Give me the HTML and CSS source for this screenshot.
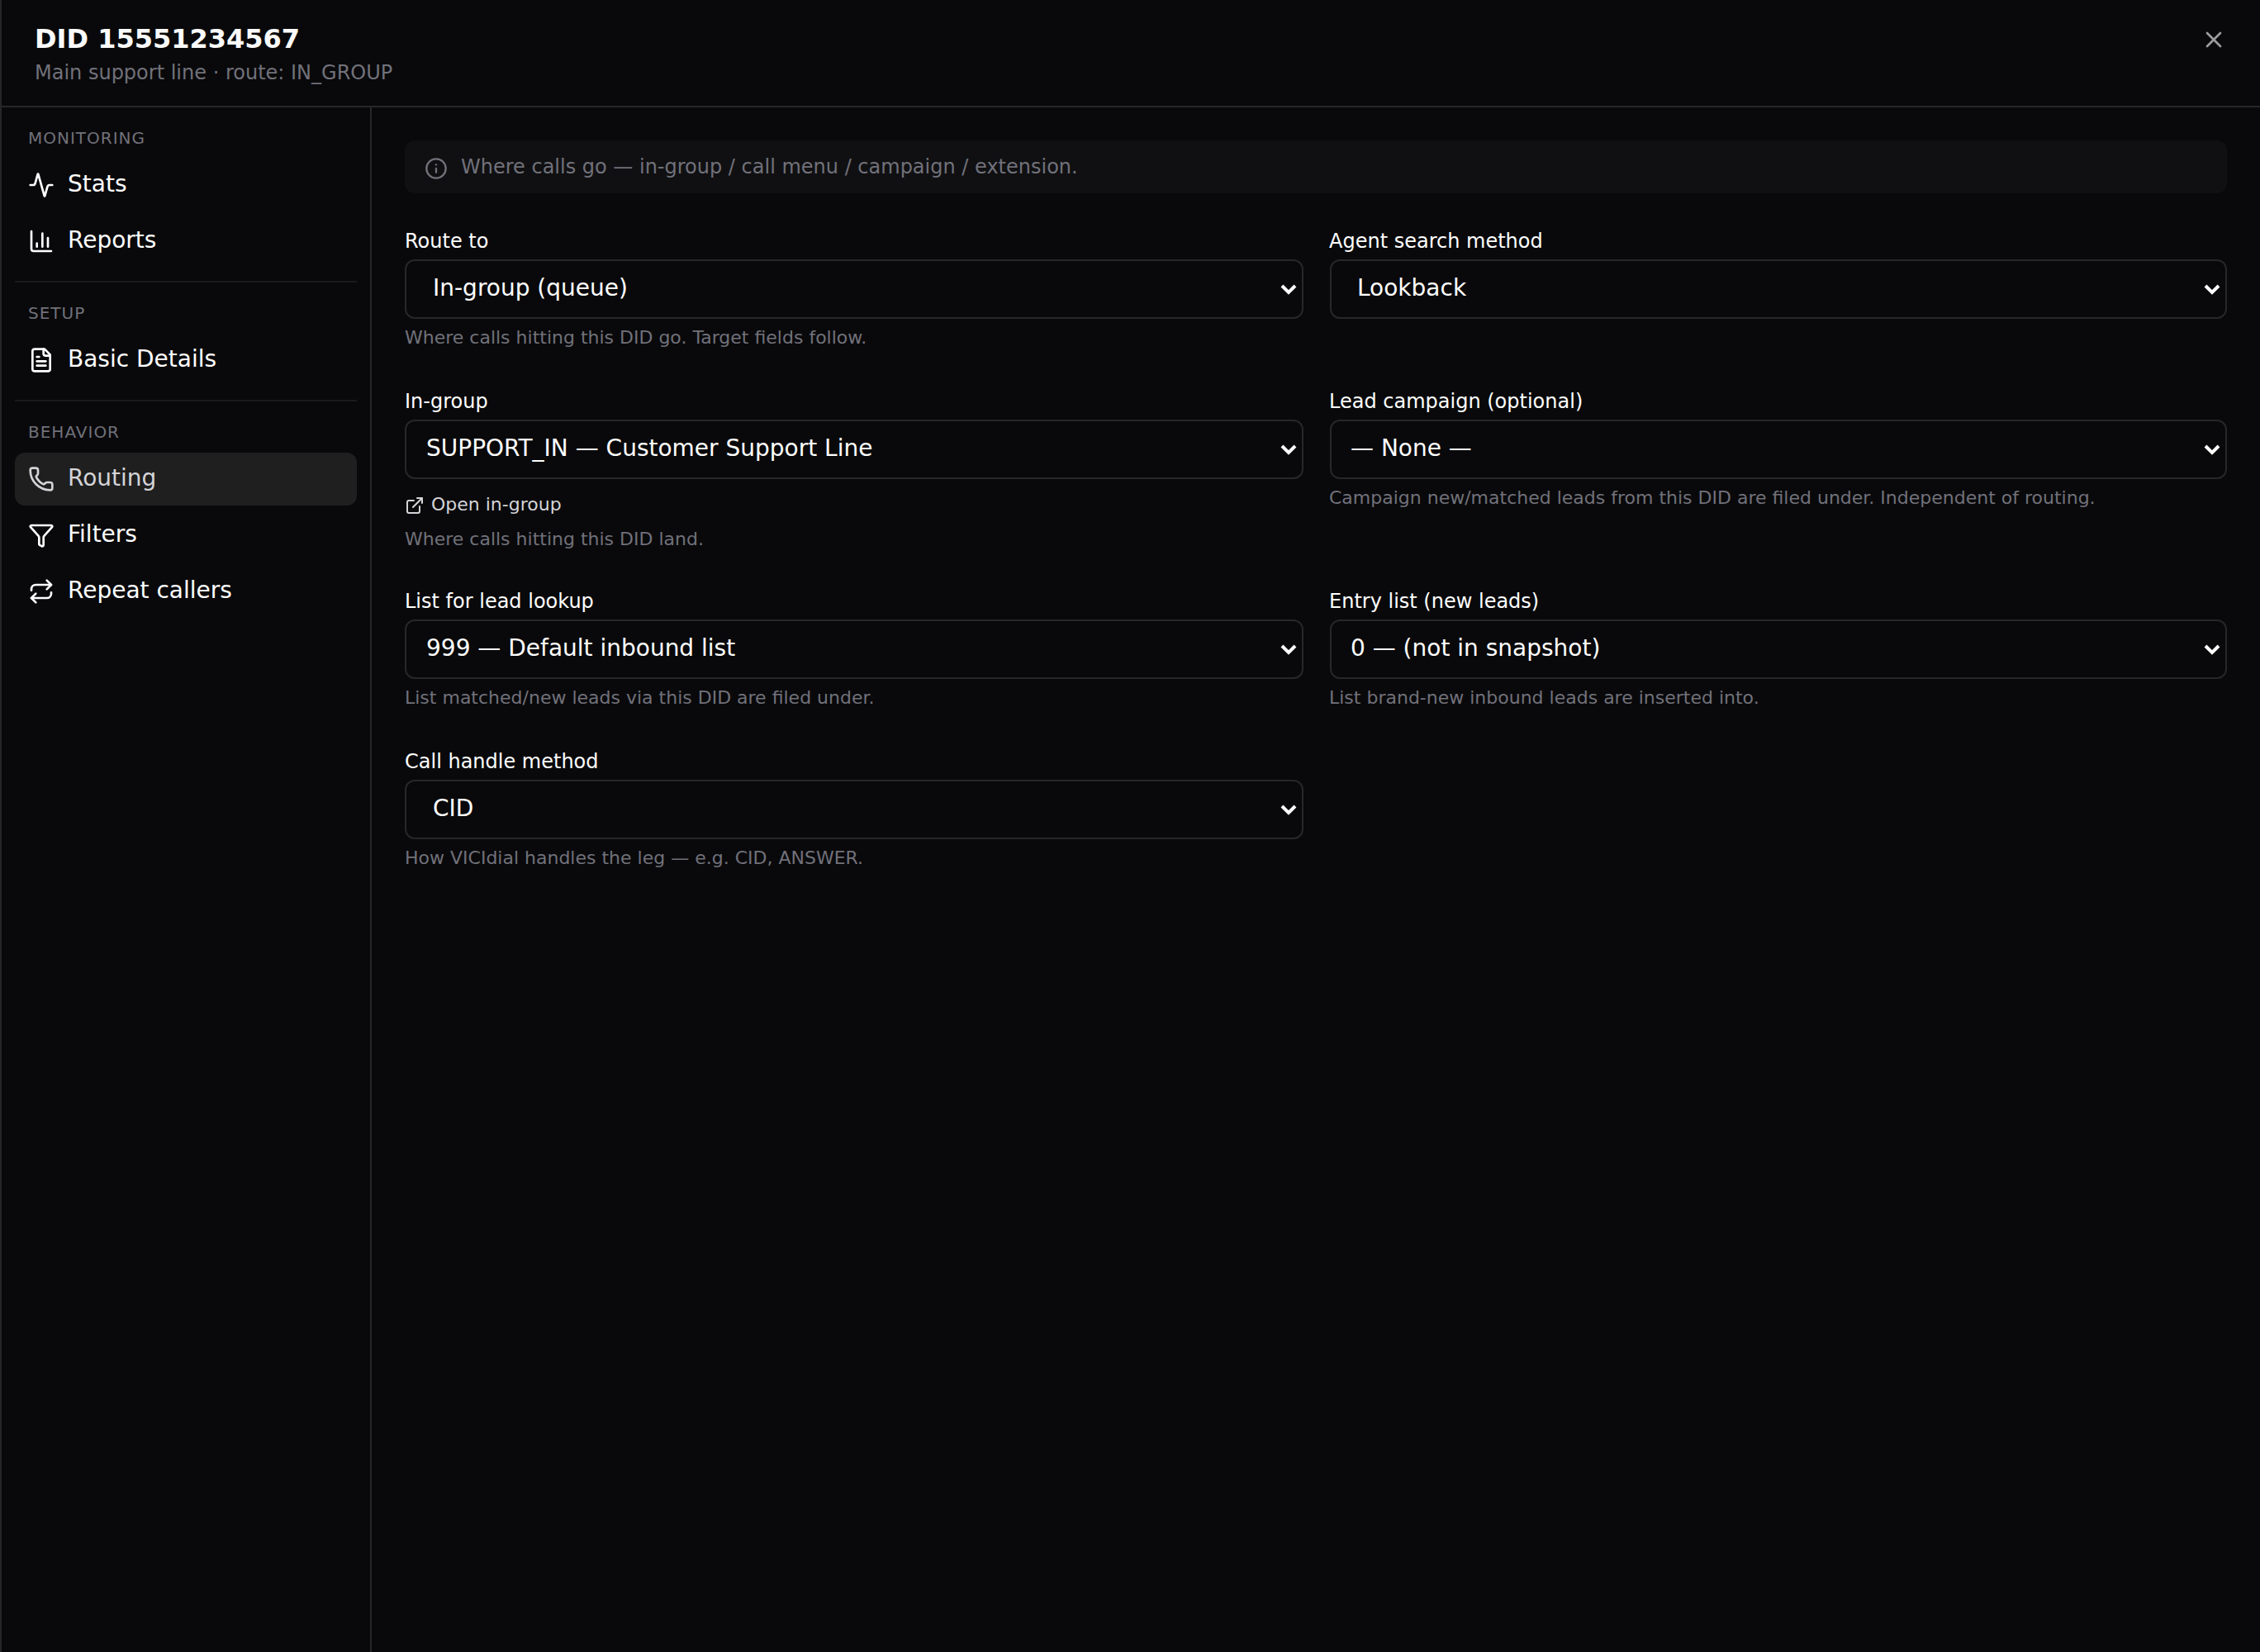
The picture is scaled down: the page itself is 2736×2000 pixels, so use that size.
FILE: index.html
```html
<!DOCTYPE html>
<html lang="en">
<head>
  <meta charset="UTF-8">
  <title>DID 15551234567</title>
  <link rel="stylesheet" href="styles.css">
</head>
<body>
  <div class="drawer">
    <header class="header">
      <div>
        <h1>DID 15551234567</h1>
        <p class="subtitle">Main support line · route: IN_GROUP</p>
      </div>
      <button class="close" aria-label="Close">
        <svg class="icon" viewBox="0 0 24 24"><path d="M18 6 6 18"/><path d="m6 6 12 12"/></svg>
      </button>
    </header>

    <div class="body">
      <nav class="sidebar">
        <div class="nav-group">
          <h2>Monitoring</h2>
          <a class="nav-item">
            <svg class="icon" viewBox="0 0 24 24"><path d="M22 12h-2.48a2 2 0 0 0-1.93 1.46l-2.35 8.36a.25.25 0 0 1-.48 0L9.24 2.18a.25.25 0 0 0-.48 0l-2.35 8.36A2 2 0 0 1 4.49 12H2"/></svg>
            <span>Stats</span>
          </a>
          <a class="nav-item">
            <svg class="icon" viewBox="0 0 24 24"><path d="M3 3v16a2 2 0 0 0 2 2h16"/><path d="M18 17V9"/><path d="M13 17V5"/><path d="M8 17v-3"/></svg>
            <span>Reports</span>
          </a>
        </div>
        <div class="nav-group">
          <h2>Setup</h2>
          <a class="nav-item">
            <svg class="icon" viewBox="0 0 24 24"><path d="M15 2H6a2 2 0 0 0-2 2v16a2 2 0 0 0 2 2h12a2 2 0 0 0 2-2V7Z"/><path d="M14 2v4a2 2 0 0 0 2 2h4"/><path d="M10 9H8"/><path d="M16 13H8"/><path d="M16 17H8"/></svg>
            <span>Basic Details</span>
          </a>
        </div>
        <div class="nav-group">
          <h2>Behavior</h2>
          <a class="nav-item active">
            <svg class="icon" viewBox="0 0 24 24"><path d="M13.832 16.568a1 1 0 0 0 1.213-.303l.355-.465A2 2 0 0 1 17 15h3a2 2 0 0 1 2 2v3a2 2 0 0 1-2 2A18 18 0 0 1 2 4a2 2 0 0 1 2-2h3a2 2 0 0 1 2 2v3a2 2 0 0 1-.8 1.6l-.468.351a1 1 0 0 0-.292 1.233 14 14 0 0 0 6.392 6.384"/></svg>
            <span>Routing</span>
          </a>
          <a class="nav-item">
            <svg class="icon" viewBox="0 0 24 24"><path d="M10 20a1 1 0 0 0 .553.895l2 1A1 1 0 0 0 14 21v-7a2 2 0 0 1 .517-1.341L21.74 4.67A1 1 0 0 0 21 3H3a1 1 0 0 0-.742 1.67l7.225 7.989A2 2 0 0 1 10 14z"/></svg>
            <span>Filters</span>
          </a>
          <a class="nav-item">
            <svg class="icon" viewBox="0 0 24 24"><path d="m17 2 4 4-4 4"/><path d="M3 11v-1a4 4 0 0 1 4-4h14"/><path d="m7 22-4-4 4-4"/><path d="M21 13v1a4 4 0 0 1-4 4H3"/></svg>
            <span>Repeat callers</span>
          </a>
        </div>
      </nav>

      <main class="content">
        <div class="info">
          <svg class="icon" viewBox="0 0 24 24"><circle cx="12" cy="12" r="10"/><path d="M12 16v-4"/><path d="M12 8h.01"/></svg>
          <span>Where calls go — in-group / call menu / campaign / extension.</span>
        </div>

        <form class="fields">
          <div class="field">
            <label for="route">Route to</label>
            <div class="select-wrap">
              <select id="route" class="plain"><option>In-group (queue)</option></select>
              <svg class="chevron" viewBox="0 0 20 14"><path d="m2 2 8 8 8-8"/></svg>
            </div>
            <p class="hint">Where calls hitting this DID go. Target fields follow.</p>
          </div>

          <div class="field">
            <label for="search_method">Agent search method</label>
            <div class="select-wrap">
              <select id="search_method" class="plain"><option>Lookback</option></select>
              <svg class="chevron" viewBox="0 0 20 14"><path d="m2 2 8 8 8-8"/></svg>
            </div>
          </div>

          <div class="field">
            <label for="ingroup">In-group</label>
            <div class="select-wrap">
              <select id="ingroup"><option>SUPPORT_IN — Customer Support Line</option></select>
              <svg class="chevron" viewBox="0 0 20 14"><path d="m2 2 8 8 8-8"/></svg>
            </div>
            <a class="open-link">
              <svg class="icon" viewBox="0 0 24 24"><path d="M15 3h6v6"/><path d="M10 14 21 3"/><path d="M18 13v6a2 2 0 0 1-2 2H5a2 2 0 0 1-2-2V8a2 2 0 0 1 2-2h6"/></svg>
              <span>Open in-group</span>
            </a>
            <p class="hint">Where calls hitting this DID land.</p>
          </div>

          <div class="field">
            <label for="campaign">Lead campaign (optional)</label>
            <div class="select-wrap">
              <select id="campaign"><option>— None —</option></select>
              <svg class="chevron" viewBox="0 0 20 14"><path d="m2 2 8 8 8-8"/></svg>
            </div>
            <p class="hint">Campaign new/matched leads from this DID are filed under. Independent of routing.</p>
          </div>

          <div class="field">
            <label for="lookup_list">List for lead lookup</label>
            <div class="select-wrap">
              <select id="lookup_list"><option>999 — Default inbound list</option></select>
              <svg class="chevron" viewBox="0 0 20 14"><path d="m2 2 8 8 8-8"/></svg>
            </div>
            <p class="hint">List matched/new leads via this DID are filed under.</p>
          </div>

          <div class="field">
            <label for="entry_list">Entry list (new leads)</label>
            <div class="select-wrap">
              <select id="entry_list"><option>0 — (not in snapshot)</option></select>
              <svg class="chevron" viewBox="0 0 20 14"><path d="m2 2 8 8 8-8"/></svg>
            </div>
            <p class="hint">List brand-new inbound leads are inserted into.</p>
          </div>

          <div class="field">
            <label for="handle_method">Call handle method</label>
            <div class="select-wrap">
              <select id="handle_method" class="plain"><option>CID</option></select>
              <svg class="chevron" viewBox="0 0 20 14"><path d="m2 2 8 8 8-8"/></svg>
            </div>
            <p class="hint">How VICIdial handles the leg — e.g. CID, ANSWER.</p>
          </div>
        </form>
      </main>
    </div>
  </div>
</body>
</html>
```

FILE: styles.css
```css
* { box-sizing: border-box; margin: 0; padding: 0; }
body { background: #09090b; color: #fff; font-family: "DejaVu Sans", sans-serif; font-size: 28px; }

.icon { width: 32px; height: 32px; flex: none; display: block; fill: none; stroke: currentColor; stroke-width: 2; stroke-linecap: round; stroke-linejoin: round; }

.drawer { min-height: 100vh; display: flex; flex-direction: column; border-left: 2px solid #27272a; }

.header { display: flex; justify-content: space-between; align-items: flex-start; height: 130px; padding: 27px 40px 0; border-bottom: 2px solid #27272a; }
.header h1 { font-size: 32px; line-height: 40px; font-weight: bold; color: #fafafa; }
.subtitle { margin-top: 5px; font-size: 24px; line-height: 32px; color: #71717a; }
.close { margin-top: 5px; border: 0; background: none; color: #9c9c9d; }

.body { flex: 1; display: flex; }

/* sidebar */
.sidebar { width: 448px; flex: none; padding: 0 16px; border-right: 2px solid #27272a; }
.nav-group { display: flex; flex-direction: column; gap: 4px; padding: 23px 0 16px; }
.nav-group + .nav-group { border-top: 2px solid #1a1a1c; }
.nav-group h2 { padding: 0 16px; margin-bottom: 7px; font-size: 20px; line-height: 28px; font-weight: normal; letter-spacing: 1px; text-transform: uppercase; color: #71717a; }
.nav-item { display: flex; align-items: center; gap: 16px; height: 64px; padding: 0 16px; border-radius: 12px; }
.nav-item span { line-height: 40px; padding-bottom: 3px; }
.nav-item.active { background: #1f1f1f; color: #d4d4d8; }

/* content */
.content { flex: 1; padding: 40px; }
.info { display: flex; gap: 16px; height: 64px; padding: 16px 24px; border-radius: 12px; background: #101012; color: #71717a; font-size: 24px; line-height: 32px; }
.info .icon { width: 28px; height: 28px; margin-top: 4px; }

.fields { display: grid; grid-template-columns: 1fr 1fr; gap: 46px 32px; margin-top: 42px; }
.field label { display: block; margin-bottom: 6px; font-size: 24px; line-height: 32px; }
.select-wrap { position: relative; margin-right: -1px; }
.field:nth-child(even) .select-wrap { margin-left: 1px; margin-right: 0; }
select { display: block; width: 100%; height: 72px; padding: 0 48px 3px 24px; appearance: none; border: 2px solid #27272a; border-radius: 12px; background: transparent; color: #fff; font: inherit; }
select.plain { padding-left: 32px; }
.field:nth-child(even) select { padding-left: 23px; }
.field:nth-child(even) select.plain { padding-left: 31px; }
.chevron { position: absolute; right: 8px; top: 30px; width: 20px; height: 14px; fill: none; stroke: #fff; stroke-width: 4; }
.hint { margin-top: 7px; margin-bottom: -1px; font-size: 22px; line-height: 32px; color: #71717a; }
.open-link { display: flex; align-items: center; gap: 8px; width: max-content; height: 32px; margin-top: 16px; font-size: 22px; color: #d4d4d8; }
.open-link .icon { width: 24px; height: 24px; }
.open-link span { line-height: 30px; padding-bottom: 2px; }
.open-link + .hint { margin-top: 9px; margin-bottom: -3px; }
```
